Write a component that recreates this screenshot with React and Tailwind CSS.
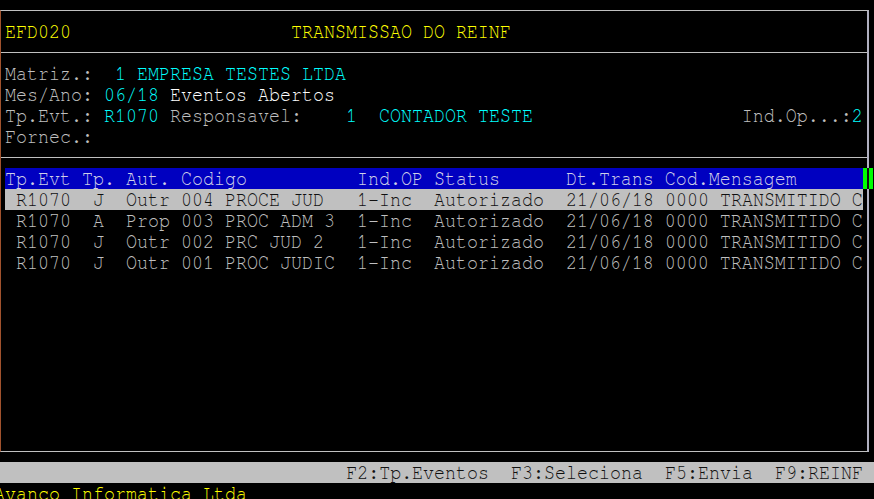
import React from 'react';

const GREY = 'text-[#c0c0c0]';
const CYAN = 'text-[#00ffff]';
const WHITE = 'text-white';
const YELLOW = 'text-[#ffff00]';

// places each text at its terminal column (11px cells)
function Cols({ segs, cls }) {
  let pos = 0;
  return segs.map(([col, text, c], i) => {
    const gap = ' '.repeat(Math.max(0, col - pos));
    pos = col + text.length;
    return (
      <span key={i} className={'inline-block scale-y-[1.15] ' + (c || cls)}>
        {gap + text}
      </span>
    );
  });
}

const rows = [
  ['J', 'Outr', '004', 'PROCE JUD'],
  ['A', 'Prop', '003', 'PROC ADM 3'],
  ['J', 'Outr', '002', 'PRC JUD 2'],
  ['J', 'Outr', '001', 'PROC JUDIC'],
];

function Rule() {
  return (
    <div className="h-[21px] flex items-center">
      <div className="h-px w-full bg-[#c0c0c0]"></div>
    </div>
  );
}

export default function App() {
  return (
    <div
      className="w-[874px] h-[499px] bg-black overflow-hidden text-[18.33px] leading-[21px] whitespace-pre"
      style={{ fontFamily: '"Nimbus Mono PS", "Nimbus Mono L", FreeMono, "Courier New", Courier, "Liberation Mono", monospace' }}
    >
      <div className="mt-[10px] w-[869px] h-[442px] border-t border-b border-t-[#c0c0c0] border-b-[#c0c0c0] border-l border-l-[#a0522d] border-r-2 border-r-[#b0b0c0] flex flex-col pt-[10px]">
        {/* title */}
        <div className="h-[21px] pl-[4px] flex items-center">
          <Cols cls={YELLOW} segs={[[0, 'EFD020'], [26, 'TRANSMISSAO DO REINF']]} />
        </div>
        <Rule />

        {/* filters */}
        <div className="pl-[4px] flex flex-col">
          <div className="h-[21px] flex items-center">
            <Cols segs={[[0, 'Matriz.:', GREY], [10, '1 EMPRESA TESTES LTDA', CYAN]]} />
          </div>
          <div className="h-[21px] flex items-center">
            <Cols segs={[[0, 'Mes/Ano:', GREY], [9, '06/18', CYAN], [15, 'Eventos Abertos', WHITE]]} />
          </div>
          <div className="h-[21px] flex items-center">
            <Cols
              segs={[
                [0, 'Tp.Evt.:', GREY],
                [9, 'R1070', CYAN],
                [15, 'Responsavel:', GREY],
                [31, '1  CONTADOR TESTE', CYAN],
                [67, 'Ind.Op...:', GREY],
                [77, '2', CYAN],
              ]}
            />
          </div>
          <div className="h-[21px] flex items-center">
            <Cols segs={[[0, 'Fornec.:', GREY]]} />
          </div>
        </div>
        <Rule />

        {/* grid */}
        <div className="pl-[4px] flex flex-col">
          <div className="relative h-[21px] w-[858px] bg-[#0000c0] flex items-center">
            <Cols
              cls="text-[#d0d0e8]"
              segs={[
                [0, 'Tp.Evt'],
                [7, 'Tp.'],
                [11, 'Aut.'],
                [16, 'Codigo'],
                [32, 'Ind.OP'],
                [39, 'Status'],
                [51, 'Dt.Trans'],
                [60, 'Cod.Mensagem'],
              ]}
            />
            <div className="absolute left-[858px] top-0 h-[21px] w-[10px] bg-[#00ff00]">
              <div className="ml-[4px] w-[2px] h-full bg-[#101010]"></div>
            </div>
          </div>
          {rows.map(([tp, aut, cod, desc], i) => (
            <div
              key={i}
              className={
                i === 0
                  ? 'h-[21px] w-[858px] flex items-center bg-[#c0c0c0] text-[#101010]'
                  : 'h-[21px] w-[858px] flex items-center text-[#c0c0c0]'
              }
            >
              <Cols
                segs={[
                  [1, 'R1070'],
                  [8, tp],
                  [11, aut],
                  [16, cod],
                  [20, desc],
                  [32, '1-Inc'],
                  [39, 'Autorizado'],
                  [51, '21/06/18'],
                  [60, '0000'],
                  [65, 'TRANSMITIDO'],
                  [77, 'C'],
                ]}
              />
            </div>
          ))}
        </div>
      </div>

      {/* function keys */}
      <div className="mt-[10px] h-[21px] bg-[#c0c0c0] flex items-center justify-end pr-[11px]">
        <Cols cls="text-[#101010]" segs={[[0, 'F2:Tp.Eventos  F3:Seleciona  F5:Envia  F9:REINF']]} />
      </div>
      <div className="h-[21px] flex items-center ml-[-6px]">
        <Cols cls={YELLOW} segs={[[0, 'Avanco Informatica Ltda']]} />
      </div>
    </div>
  );
}
